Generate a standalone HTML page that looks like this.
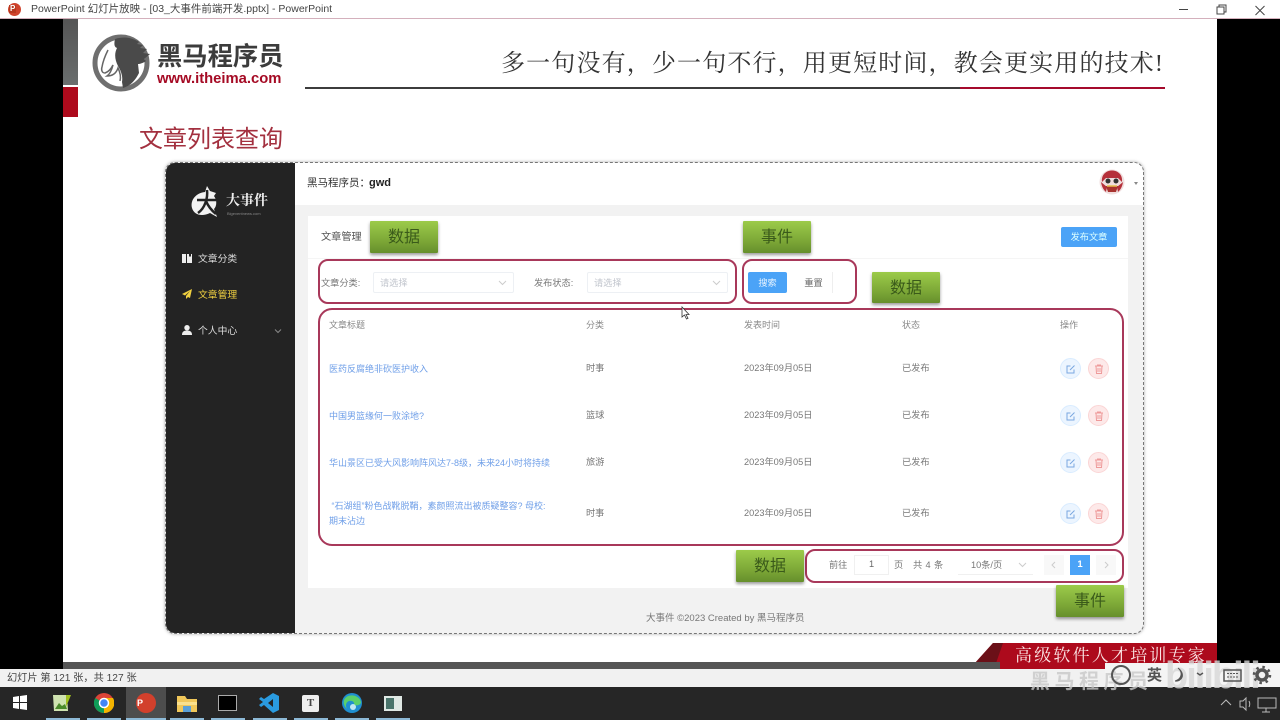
<!DOCTYPE html>
<html lang="zh"><head><meta charset="utf-8"><title>PowerPoint</title>
<style>
html,body{margin:0;padding:0;width:1280px;height:720px;overflow:hidden;background:#000;font-family:"Liberation Sans","Noto Sans CJK SC",sans-serif}
#w{position:absolute;left:0;top:0;width:1280px;height:720px;overflow:hidden;background:#000;filter:blur(.35px)}
.a,.t{position:absolute}
.t{white-space:nowrap;line-height:1}
.g{position:absolute;background:linear-gradient(#9ccb4a,#7ba636 65%,#668f2c);box-shadow:0 2px 3px rgba(0,0,0,.4);color:#3a5a1a;font-size:16px;text-align:center;border-radius:1px}
.r{position:absolute;border:2.5px solid #a8385a;border-radius:10px;box-sizing:border-box}
.c{font-size:9.2px;color:#777}
.l{font-size:9px;color:#6f9fe8}
.h{font-size:9px;color:#888}
.ci{position:absolute;width:21px;height:21px;border-radius:50%}
.ci svg{position:absolute;left:5px;top:5px}
.e{background:#ecf5ff;border:1px solid #d9ecff;box-sizing:border-box}
.d{background:#fde9e9;border:1px solid #fbd5d5;box-sizing:border-box}
.u{position:absolute;top:718px;height:2px;background:#8db9d6}
</style></head><body><div id="w">

<!-- title bar -->
<div class="a" style="left:0;top:0;width:1280px;height:18px;background:#fff;border-bottom:1px solid #d4b0bc"></div>
<div class="a" style="left:8px;top:3px;width:13px;height:13px;border-radius:50%;background:#d0432c"></div>
<div class="t" style="left:9px;top:5px;font-size:8px;font-weight:bold;color:#fff;background:#b7381f;padding:0 1px">P</div>
<div class="t" style="left:31px;top:4px;font-size:10.5px;color:#444">PowerPoint 幻灯片放映 - [03_大事件前端开发.pptx] - PowerPoint</div>
<svg class="a" style="left:1170px;top:2px" width="110" height="16" fill="none" stroke="#444"><path d="M9 7.500h9"/><path d="M47 5h7v7h-7zM49 5V3h7v7h-2"/><path d="M85.500 4l9 9M94.500 4l-9 9"/></svg>

<!-- slide -->
<div class="a" style="left:63px;top:19px;width:1154px;height:643px;background:#fff"></div>
<div class="a" style="left:63px;top:19px;width:15px;height:66px;background:linear-gradient(#555,#6a6e6e)"></div>
<div class="a" style="left:63px;top:87px;width:15px;height:30px;background:#ad0a1c"></div>

<!-- logo -->
<svg class="a" style="left:91px;top:34px" width="62" height="58" viewBox="0 0 62 58">
<circle cx="30" cy="29" r="26" fill="none" stroke="#6f6f6f" stroke-width="5"/>
<path d="M24 5c10-3 18-1 24 3l-2 2 6 1-3 3 7 1-4 4 7 1-6 5 2 2c-3 2-6 3-8 3l1 9c-4 8-9 13-16 15l-1-6c1-6-1-11-4-16-3-6-4-12-1-18-3-1-3-4-2-9z" fill="#4a4a4a"/>
<path d="M17 16c-3 6-5 11-6 17-1 3 0 6 3 6 3-1 6-4 8-8-1 4-3 9-6 11 5 0 9-2 11-8 2 4 3 9 2 13" fill="none" stroke="#666" stroke-width="1.500"/>
</svg>
<div class="t" style="left:157px;top:45px;font-size:25.3px;font-weight:bold;color:#3c3c3c">黑马程序员</div>
<div class="t" style="left:157px;top:72px;font-size:14.800px;font-weight:bold;color:#a50a24">www.itheima.com</div>

<!-- slogan -->
<div class="t" style="left:501px;top:52px;font-size:24px;color:#333;letter-spacing:1.150px;font-family:'Liberation Serif','Noto Serif CJK SC',serif;width:670px">多一句没有，少一句不行，用更短时间，教会更实用的技术!</div>
<div class="a" style="left:305px;top:87px;width:655px;height:2px;background:#3c3c3c"></div>
<div class="a" style="left:960px;top:87px;width:205px;height:2px;background:#a50a2c"></div>

<div class="t" style="left:139px;top:128px;font-size:24px;color:#a3303f">文章列表查询</div>

<!-- app window -->
<div class="a" style="left:165px;top:162px;width:979px;height:472px;border-radius:10px;background:#f2f2f2;border:1px dashed #777;box-sizing:border-box;box-shadow:0 0 3px #aaa"></div>
<div class="a" style="left:166px;top:163px;width:129px;height:470px;background:#232323;border-radius:9px 0 0 9px"></div>
<div class="a" style="left:295px;top:163px;width:848px;height:42px;background:#fff;border-radius:0 9px 0 0"></div>

<!-- sidebar -->
<svg class="a" style="left:190px;top:185px" width="34" height="34" viewBox="0 0 34 34"><path d="M15 7l2-6 3 5 6 2-2 3c3 4 3 10 0 13l3 8-7-4c-8 4-16 2-18-5C0 15 6 8 15 7z" fill="#f2f2f2"/><path d="M7 15h19M17 5c1 8-2 18-9 23M16 16c2 5 5 9 10 13" fill="none" stroke="#232323" stroke-width="2.500"/></svg>
<div class="t" style="left:226px;top:195px;font-size:14px;color:#eee;font-family:'Liberation Serif','Noto Serif CJK SC',serif;font-weight:bold">大事件</div>
<div class="t" style="left:227px;top:212px;font-size:4px;color:#888">Bigeventnews.com</div>

<svg class="a" style="left:182px;top:253px" width="10" height="10"><path d="M0 1h4v9H0zM5 1h2v3l1-1 1 1V1h1v9H5z" fill="#eee"/></svg>
<div class="t" style="left:198px;top:255px;font-size:9.800px;color:#ddd">文章分类</div>
<svg class="a" style="left:182px;top:289px" width="10" height="10"><path d="M10 0L0 5l3 1.500L8 2 4 7v3l2-2 2 1z" fill="#f0d040"/></svg>
<div class="t" style="left:198px;top:291px;font-size:9.800px;color:#f0d040">文章管理</div>
<svg class="a" style="left:182px;top:325px" width="10" height="10"><circle cx="5" cy="2.700" r="2.700" fill="#eee"/><path d="M0 10c0-3.500 2-4.500 5-4.500s5 1 5 4.500z" fill="#eee"/></svg>
<div class="t" style="left:198px;top:327px;font-size:9.800px;color:#ddd">个人中心</div>
<svg class="a" style="left:274px;top:328px" width="8" height="6" fill="none" stroke="#888"><path d="M1 1.500l3 3 3-3"/></svg>

<!-- header -->
<div class="t" style="left:307px;top:178px;font-size:10.500px;color:#333">黑马程序员：</div>
<div class="t" style="left:369px;top:178px;font-size:11px;font-weight:bold;color:#222">gwd</div>
<svg class="a" style="left:1099px;top:169px" width="26" height="26" viewBox="0 0 26 26"><circle cx="13" cy="13" r="12.500" fill="#f0dede"/><path d="M3 13C2 5 8 1.500 13 1.500S24 5 23 13l-4-4H7z" fill="#b5303a"/><path d="M2 13c1 6 3 8 5 10l1-5zM24 13c-1 6-3 8-5 10l-1-5z" fill="#b5303a"/><circle cx="9" cy="12" r="2.500" fill="#333"/><circle cx="17" cy="12" r="2.500" fill="#333"/><path d="M7 17h12l-2 6H9z" fill="#a8332f"/><path d="M8 17h10" stroke="#e8c050" stroke-width="1.500"/></svg>
<div class="a" style="left:1134px;top:182px;width:0;height:0;border:2.500px solid transparent;border-top:3px solid #888"></div>

<!-- card -->
<div class="a" style="left:308px;top:216px;width:820px;height:372px;background:#fff"></div>
<div class="a" style="left:308px;top:258px;width:820px;height:1px;background:#f5f5f5"></div>
<div class="t" style="left:321px;top:233px;font-size:10.200px;color:#555">文章管理</div>
<div class="a" style="left:1061px;top:227px;width:56px;height:20px;background:#4ba3f7;border-radius:2px;color:#dff;font-size:9.200px;line-height:21px;text-align:center">发布文章</div>

<!-- filters -->
<div class="t c" style="left:321px;top:279px">文章分类:</div>
<div class="a" style="left:373px;top:272px;width:141px;height:21px;border:1px solid #edf0f4;box-sizing:border-box;border-radius:2px"></div>
<div class="t" style="left:380px;top:279px;font-size:9.200px;color:#c0c4cc">请选择</div>
<svg class="a" style="left:498px;top:280px" width="9" height="6" fill="none" stroke="#ccc"><path d="M1 1l3.500 3.500L8 1"/></svg>
<div class="t c" style="left:534px;top:279px">发布状态:</div>
<div class="a" style="left:587px;top:272px;width:141px;height:21px;border:1px solid #edf0f4;box-sizing:border-box;border-radius:2px"></div>
<div class="t" style="left:594px;top:279px;font-size:9.200px;color:#c0c4cc">请选择</div>
<svg class="a" style="left:712px;top:280px" width="9" height="6" fill="none" stroke="#ccc"><path d="M1 1l3.500 3.500L8 1"/></svg>
<div class="a" style="left:748px;top:272px;width:39px;height:21px;background:#4ba3f7;border-radius:2px;color:#e8f4ff;font-size:9.200px;line-height:22px;text-align:center">搜索</div>
<div class="a" style="left:795px;top:272px;width:38px;height:21px;border-right:1px solid #eee;box-sizing:border-box;color:#666;font-size:9.200px;line-height:22px;text-align:center">重置</div>

<!-- table -->
<div class="t h" style="left:329px;top:321px">文章标题</div>
<div class="t h" style="left:586px;top:321px">分类</div>
<div class="t h" style="left:744px;top:321px">发表时间</div>
<div class="t h" style="left:902px;top:321px">状态</div>
<div class="t h" style="left:1060px;top:321px">操作</div>

<div class="t l" style="left:329px;top:365px">医药反腐绝非砍医护收入</div>
<div class="t c" style="left:586px;top:364px">时事</div><div class="t c" style="left:744px;top:364px">2023年09月05日</div><div class="t c" style="left:902px;top:364px">已发布</div>
<div class="t l" style="left:329px;top:412px">中国男篮缘何一败涂地?</div>
<div class="t c" style="left:586px;top:411px">篮球</div><div class="t c" style="left:744px;top:411px">2023年09月05日</div><div class="t c" style="left:902px;top:411px">已发布</div>
<div class="t l" style="left:329px;top:459px">华山景区已受大风影响阵风达7-8级，未来24小时将持续</div>
<div class="t c" style="left:586px;top:458px">旅游</div><div class="t c" style="left:744px;top:458px">2023年09月05日</div><div class="t c" style="left:902px;top:458px">已发布</div>
<div class="t l" style="left:329px;top:502px">&nbsp;“石湖组”粉色战靴脱鞘，素颜照流出被质疑整容? 母校:</div>
<div class="t l" style="left:329px;top:517px">期末沾边</div>
<div class="t c" style="left:586px;top:509px">时事</div><div class="t c" style="left:744px;top:509px">2023年09月05日</div><div class="t c" style="left:902px;top:509px">已发布</div>

<div class="ci e" style="left:1060px;top:358px"><svg width="10" height="10" fill="none" stroke="#7aa8e0"><path d="M8 5.500V9H1V2h3.500M4 6l4.500-4.500"/></svg></div><div class="ci d" style="left:1088px;top:358px"><svg width="10" height="10" fill="none" stroke="#ee9a9a"><path d="M1 2h8M3.500 2V1h3v1M2 2l.5 7.500h5L8 2M4 4v4M6 4v4"/></svg></div>
<div class="ci e" style="left:1060px;top:405px"><svg width="10" height="10" fill="none" stroke="#7aa8e0"><path d="M8 5.500V9H1V2h3.500M4 6l4.500-4.500"/></svg></div><div class="ci d" style="left:1088px;top:405px"><svg width="10" height="10" fill="none" stroke="#ee9a9a"><path d="M1 2h8M3.500 2V1h3v1M2 2l.5 7.500h5L8 2M4 4v4M6 4v4"/></svg></div>
<div class="ci e" style="left:1060px;top:452px"><svg width="10" height="10" fill="none" stroke="#7aa8e0"><path d="M8 5.500V9H1V2h3.500M4 6l4.500-4.500"/></svg></div><div class="ci d" style="left:1088px;top:452px"><svg width="10" height="10" fill="none" stroke="#ee9a9a"><path d="M1 2h8M3.500 2V1h3v1M2 2l.5 7.500h5L8 2M4 4v4M6 4v4"/></svg></div>
<div class="ci e" style="left:1060px;top:503px"><svg width="10" height="10" fill="none" stroke="#7aa8e0"><path d="M8 5.500V9H1V2h3.500M4 6l4.500-4.500"/></svg></div><div class="ci d" style="left:1088px;top:503px"><svg width="10" height="10" fill="none" stroke="#ee9a9a"><path d="M1 2h8M3.500 2V1h3v1M2 2l.5 7.500h5L8 2M4 4v4M6 4v4"/></svg></div>

<!-- pagination -->
<div class="t c" style="left:829px;top:561px">前往</div>
<div class="a" style="left:854px;top:555px;width:35px;height:20px;border:1px solid #f0f0f0;box-sizing:border-box;font-size:9.200px;color:#666;text-align:center;line-height:17px">1</div>
<div class="t c" style="left:894px;top:561px">页</div>
<div class="t c" style="left:913px;top:561px;letter-spacing:.4px">共 4 条</div>
<div class="a" style="left:958px;top:555px;width:75px;height:20px;border-bottom:1px solid #f0f0f0;box-sizing:border-box"></div>
<div class="t c" style="left:971px;top:561px">10条/页</div>
<svg class="a" style="left:1018px;top:562px" width="9" height="6" fill="none" stroke="#ccc"><path d="M1 1l3.500 3.500L8 1"/></svg>
<div class="a" style="left:1044px;top:555px;width:20px;height:20px;background:#f8f8f8"></div>
<svg class="a" style="left:1051px;top:561px" width="6" height="8" fill="none" stroke="#ccc"><path d="M4 1L1 4l3 3"/></svg>
<div class="a" style="left:1070px;top:555px;width:20px;height:20px;background:#4ba3f7;color:#fff;font-size:9.500px;font-weight:bold;text-align:center;line-height:20px">1</div>
<div class="a" style="left:1096px;top:555px;width:20px;height:20px;background:#f8f8f8"></div>
<svg class="a" style="left:1103px;top:561px" width="6" height="8" fill="none" stroke="#ccc"><path d="M2 1l3 3-3 3"/></svg>

<div class="t" style="left:646px;top:614px;font-size:9.500px;color:#777">大事件 ©2023 Created by 黑马程序员</div>

<!-- annotation boxes -->
<div class="r" style="left:318px;top:259px;width:419px;height:45px"></div>
<div class="r" style="left:742px;top:259px;width:115px;height:45px"></div>
<div class="r" style="left:318px;top:308px;width:806px;height:238px;border-radius:14px"></div>
<div class="r" style="left:805px;top:549px;width:319px;height:34px"></div>

<div class="g" style="left:370px;top:221px;width:68px;height:32px;line-height:34px">数据</div>
<div class="g" style="left:743px;top:221px;width:68px;height:32px;line-height:34px">事件</div>
<div class="g" style="left:872px;top:272px;width:68px;height:31px;line-height:33px">数据</div>
<div class="g" style="left:736px;top:550px;width:68px;height:32px;line-height:34px">数据</div>
<div class="g" style="left:1056px;top:585px;width:68px;height:32px;line-height:34px">事件</div>

<!-- cursor -->
<svg class="a" style="left:681px;top:306px" width="10" height="14"><path d="M1 1v10l2.500-2 2 4 1.500-.7-2-3.800h3z" fill="#fff" stroke="#333" stroke-width=".8"/></svg>

<!-- red banner -->
<svg class="a" style="left:970px;top:642px" width="247" height="27"><path d="M5 21L23 1h224v26H5z" fill="#ad0a1c"/><path d="M5 21L23 1h10L24 27H5z" fill="#6b1018"/></svg>
<div class="t" style="left:1015px;top:647px;font-size:17px;letter-spacing:2.200px;color:#fbe5e5;font-family:'Liberation Serif','Noto Serif CJK SC',serif">高级软件人才培训专家</div>

<!-- bottom -->
<div class="a" style="left:63px;top:662px;width:937px;height:7px;background:#555"></div>
<div class="a" style="left:0;top:669px;width:1280px;height:18px;background:#f1f1f1"></div>
<div class="t" style="left:7px;top:674px;font-size:10.200px;color:#444">幻灯片 第 121 张，共 127 张</div>
<div class="a" style="left:1105px;top:663px;width:175px;height:24px;background:#f4f4f4"></div>
<div class="a" style="left:0;top:687px;width:1280px;height:33px;background:#262626"></div>
<div class="a" style="left:126px;top:687px;width:40px;height:33px;background:#4d4d4d"></div>
<div class="u" style="left:46px;width:34px"></div><div class="u" style="left:87px;width:34px"></div><div class="u" style="left:126px;width:40px"></div><div class="u" style="left:170px;width:34px"></div><div class="u" style="left:211px;width:34px"></div><div class="u" style="left:253px;width:34px"></div><div class="u" style="left:294px;width:34px"></div><div class="u" style="left:335px;width:34px"></div><div class="u" style="left:376px;width:34px"></div>

<!-- watermark under IME -->
<div class="t" style="left:1030px;top:672px;font-size:20px;letter-spacing:4.500px;color:rgba(200,200,200,.8);font-weight:bold">黑马程序员</div>
<div class="t" style="left:1165px;top:657px;font-size:38px;color:rgba(215,215,215,.8);font-weight:bold;letter-spacing:-2px">bilibili</div>

<!-- IME bar -->
<div class="a" style="left:1111px;top:665px;width:20px;height:20px;border:2px solid #555;border-radius:50%;box-sizing:border-box"></div>
<div class="t" style="left:1147px;top:668px;font-size:15px;font-weight:bold;color:#555">英</div>
<svg class="a" style="left:1175px;top:664px" width="100" height="22" fill="none" stroke="#555"><path d="M3 4c5 4 4 11-3 13 7 1 11-7 3-13z" fill="#555"/><path d="M22 9l3 2 3-2" stroke-width="1.500"/><rect x="49" y="6" width="17" height="11" stroke-width="1.500"/><path d="M52 9.500h11M52 13h11" stroke-dasharray="2 1"/><circle cx="87" cy="11" r="5" stroke-width="3.500"/><circle cx="87" cy="11" r="8" stroke-width="2.500" stroke-dasharray="2.500 3.800"/></svg>

<!-- taskbar icons -->
<svg class="a" style="left:13px;top:695px" width="14" height="15"><path d="M0 2l6-1v6H0zM7 1l7-1v7H7zM0 8h6v6l-6-1zM7 8h7v7l-7-1z" fill="#fff"/></svg>
<svg class="a" style="left:52px;top:694px" width="20" height="18"><path d="M1 1h14l1 16H2z" fill="#cfe3b0"/><path d="M3 15l4-6 3 3 3-2 2 5z" fill="#4a8a2a"/><path d="M14 1l5 0-5 12z" fill="#a0c020"/></svg>
<svg class="a" style="left:94px;top:693px" width="20" height="20" viewBox="0 0 20 20"><circle cx="10" cy="10" r="10" fill="#db4437"/><path d="M10 10L1.300 5A10 10 0 0 0 10 20z" fill="#0f9d58"/><path d="M10 10v10A10 10 0 0 0 19 5H10z" fill="#f4b400"/><circle cx="10" cy="10" r="4.500" fill="#4285f4" stroke="#fff" stroke-width="1.500"/></svg>
<div class="a" style="left:136px;top:693px;width:20px;height:20px;border-radius:50%;background:#d2402c"></div>
<div class="t" style="left:137px;top:699px;font-size:9px;font-weight:bold;color:#fff">P</div>
<svg class="a" style="left:177px;top:695px" width="20" height="17"><path d="M0 1h8l2 3h10v13H0z" fill="#f0c75a"/><path d="M0 7h20v3H0z" fill="#f9e08e"/><path d="M6 11h8v6H6z" fill="#5aa0d8"/></svg>
<div class="a" style="left:218px;top:695px;width:19px;height:16px;background:#000;border:1px solid #aaa;box-sizing:border-box"></div>
<svg class="a" style="left:259px;top:693px" width="20" height="20"><path d="M14 0l6 3v14l-6 3-9-8-3 2-2-2 4-3-4-3 2-2 3 2zM14 6l-5 4 5 4z" fill="#2a9be0"/></svg>
<div class="a" style="left:302px;top:695px;width:17px;height:17px;background:#eee;border-radius:2px;color:#444;font-size:11px;font-weight:bold;text-align:center;line-height:17px;font-family:'Liberation Serif',serif">T</div>
<svg class="a" style="left:342px;top:693px" width="20" height="20" viewBox="0 0 20 20"><circle cx="10" cy="10" r="10" fill="#1f8fd0"/><path d="M2 7C5 0 17 1 19 9c0 3-4 4-7 3 1-3-2-5-5-4-3 1-4 5-2 8-2-2-4-5-3-9z" fill="#5ad06a"/><circle cx="11" cy="14" r="3" fill="#bfe8f5"/></svg>
<div class="a" style="left:384px;top:696px;width:18px;height:15px;background:#dfe8e4"></div>
<div class="a" style="left:386px;top:698px;width:8px;height:11px;background:#49736a"></div>

<!-- tray -->
<svg class="a" style="left:1220px;top:695px" width="60" height="20" fill="none" stroke="#bbb"><path d="M1 10l5-5 5 5"/><path d="M20 6h3l3-3v12l-3-3h-3zM29 6c1 2 1 4 0 6"/><path d="M38 3h18v10H38zM42 17h8M46 13v4"/></svg>
</div></body></html>
